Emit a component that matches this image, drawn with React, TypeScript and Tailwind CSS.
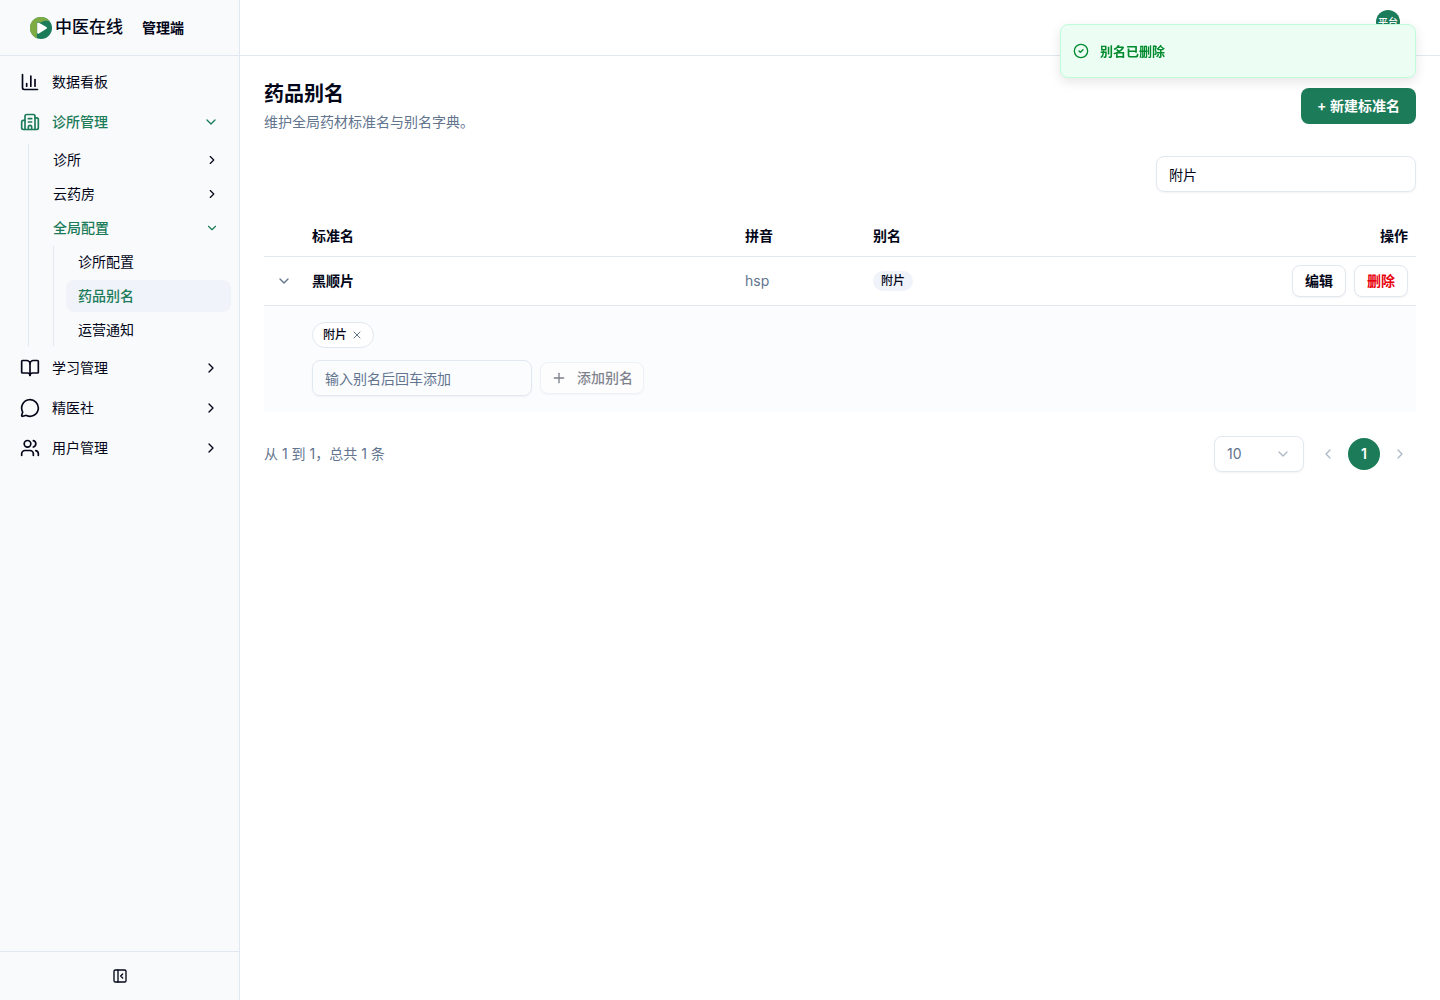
import React, { useState } from 'react';
import {
  BookOpen,
  ChevronDown,
  ChevronLeft,
  ChevronRight,
  MessageCircle,
  Plus,
  Users,
  X,
} from 'lucide-react';

interface MenuEntry {
  label: string;
  icon?: React.ReactNode;
  active?: boolean;
  open?: boolean;
  children?: MenuEntry[];
}

interface StandardName {
  id: number;
  name: string;
  pinyin: string;
  aliases: string[];
}

const ChartIcon = () => (
  <svg className="size-5" viewBox="0 0 24 24" fill="none" stroke="currentColor" strokeWidth="2" strokeLinecap="round" strokeLinejoin="round">
    <path d="M3 3v16a2 2 0 0 0 2 2h16" />
    <path d="M18 17V9" />
    <path d="M13 17V5" />
    <path d="M8 17v-3" />
  </svg>
);

const ClinicIcon = () => (
  <svg className="size-5" viewBox="0 0 24 24" fill="none" stroke="currentColor" strokeWidth="2" strokeLinecap="round" strokeLinejoin="round">
    <path d="M10 12h4" />
    <path d="M10 8h4" />
    <path d="M14 21v-3a2 2 0 0 0-4 0v3" />
    <path d="M6 10H4a2 2 0 0 0-2 2v7a2 2 0 0 0 2 2h16a2 2 0 0 0 2-2V9a2 2 0 0 0-2-2h-2" />
    <path d="M6 21V5a2 2 0 0 1 2-2h8a2 2 0 0 1 2 2v16" />
  </svg>
);

const CollapseIcon = () => (
  <svg className="size-4" viewBox="0 0 24 24" fill="none" stroke="currentColor" strokeWidth="2" strokeLinecap="round" strokeLinejoin="round">
    <rect width="18" height="18" x="3" y="3" rx="2" />
    <path d="M9 3v18" />
    <path d="m16 15-3-3 3-3" />
  </svg>
);

const Logo = () => (
  <svg className="size-[22px]" viewBox="0 0 22 22">
    <circle cx="11" cy="11" r="11" fill="#1c7c59" />
    <path d="M6.800 21.200A11 11 0 1 1 20 4.800C17 3 13.500 3.500 11 5.500L7 5Z" fill="#7fab45" />
    <path d="M7.200 6.800q0-2 1.700-1.100l7.500 4.200q1.500.9 0 1.900l-7.500 4.700q-1.700.9-1.700-1Z" fill="#fff" />
  </svg>
);

const menu: MenuEntry[] = [
  { label: '数据看板', icon: <ChartIcon /> },
  {
    label: '诊所管理',
    icon: <ClinicIcon />,
    active: true,
    open: true,
    children: [
      { label: '诊所', children: [] },
      { label: '云药房', children: [] },
      {
        label: '全局配置',
        active: true,
        open: true,
        children: [{ label: '诊所配置' }, { label: '药品别名', active: true }, { label: '运营通知' }],
      },
    ],
  },
  { label: '学习管理', icon: <BookOpen className="size-5" />, children: [] },
  { label: '精医社', icon: <MessageCircle className="size-5" />, children: [] },
  { label: '用户管理', icon: <Users className="size-5" />, children: [] },
];

const rows: StandardName[] = [{ id: 1, name: '黑顺片', pinyin: 'hsp', aliases: ['附片'] }];

const MenuItem = ({ entry, level }: { entry: MenuEntry; level: number }) => {
  const [open, setOpen] = useState(!!entry.open);
  const color = entry.active ? 'font-medium text-[#1c7c59]' : '';
  const chevron = level === 0 ? 'size-4' : 'size-[14px]';

  if (!entry.children) {
    return (
      <li>
        <a
          href="#"
          className={`flex items-center gap-3 rounded-lg px-3 ${level === 0 ? 'h-9' : 'h-8'} ${color} ${
            entry.active ? 'bg-[#f0f3f9]' : ''
          }`}
        >
          {entry.icon}
          {entry.label}
        </a>
      </li>
    );
  }

  return (
    <li>
      <button
        type="button"
        aria-expanded={open}
        onClick={() => setOpen(!open)}
        className={`flex w-full items-center gap-3 rounded-lg px-3 text-left ${level === 0 ? 'h-9' : 'h-8'} ${color}`}
      >
        {entry.icon}
        <span className="flex-1">{entry.label}</span>
        {open ? <ChevronDown className={chevron} /> : <ChevronRight className={chevron} />}
      </button>
      {open && entry.children.length > 0 && (
        <ul
          className={`flex flex-col gap-[2px] border-l border-slate-200 pl-3 ${
            level === 0 ? 'mt-1 ml-5' : 'mt-[2px] ml-3'
          }`}
        >
          {entry.children.map((child) => (
            <MenuItem key={child.label} entry={child} level={level + 1} />
          ))}
        </ul>
      )}
    </li>
  );
};

const Sidebar = () => (
  <aside className="flex w-60 shrink-0 flex-col border-r border-slate-200 bg-[#f9fafc]">
    <div className="flex h-14 items-center border-b border-slate-200 pl-[30px]">
      <Logo />
      <span className="ml-[3px] text-[17px] font-medium">中医在线</span>
      <span className="ml-[19px] font-semibold">管理端</span>
    </div>
    <nav className="flex-1 p-2">
      <ul className="flex flex-col gap-1">
        {menu.map((entry) => (
          <MenuItem key={entry.label} entry={entry} level={0} />
        ))}
      </ul>
    </nav>
    <div className="flex h-[49px] items-center justify-center border-t border-slate-200">
      <button type="button" aria-label="收起侧边栏" className="flex size-8 items-center justify-center">
        <CollapseIcon />
      </button>
    </div>
  </aside>
);

const AliasTable = () => {
  const [alias, setAlias] = useState('');

  return (
    <table className="mt-6 w-full table-fixed border-separate border-spacing-0 text-left">
      <colgroup>
        <col className="w-10" />
        <col />
        <col className="w-32" />
        <col className="w-[391px]" />
        <col className="w-40" />
      </colgroup>
      <thead>
        <tr className="h-[41px] *:border-b *:border-slate-200">
          <th />
          <th className="px-2 font-semibold">标准名</th>
          <th className="px-2 font-semibold">拼音</th>
          <th className="px-2 font-semibold">别名</th>
          <th className="px-2 text-right font-semibold">操作</th>
        </tr>
      </thead>
      <tbody>
        {rows.map((row) => (
          <React.Fragment key={row.id}>
            <tr className="h-[49px] *:border-b *:border-slate-200">
              <td>
                <button type="button" aria-label="展开" className="ml-3 flex size-4 items-center text-slate-500">
                  <ChevronDown className="size-4" />
                </button>
              </td>
              <td className="px-2 font-semibold">{row.name}</td>
              <td className="px-2 text-slate-500">{row.pinyin}</td>
              <td className="px-2">
                <div className="flex gap-1">
                  {row.aliases.map((item) => (
                    <span key={item} className="flex h-5 items-center rounded-full bg-[#f0f3f9] px-2 text-xs font-medium">
                      {item}
                    </span>
                  ))}
                </div>
              </td>
              <td className="px-2">
                <div className="flex justify-end gap-2">
                  <button type="button" className="h-8 rounded-lg border border-slate-200 bg-white px-3 font-semibold shadow-xs">
                    编辑
                  </button>
                  <button
                    type="button"
                    className="h-8 rounded-lg border border-slate-200 bg-white px-3 font-semibold text-[#e7000b] shadow-xs"
                  >
                    删除
                  </button>
                </div>
              </td>
            </tr>
            <tr className="bg-[#fbfcfe]">
              <td colSpan={5} className="py-4 pr-2 pl-12">
                <div className="flex flex-wrap gap-2">
                  {row.aliases.map((item) => (
                    <span
                      key={item}
                      className="flex h-[26px] items-center gap-1 rounded-full border border-slate-200 bg-white px-[10px] text-xs font-medium"
                    >
                      {item}
                      <button type="button" aria-label={`删除别名 ${item}`} className="text-slate-500">
                        <X className="size-3" />
                      </button>
                    </span>
                  ))}
                </div>
                <div className="mt-3 flex items-center gap-2">
                  <input
                    type="text"
                    aria-label="别名"
                    value={alias}
                    onChange={(e) => setAlias(e.target.value)}
                    placeholder="输入别名后回车添加"
                    className="h-9 w-[220px] rounded-lg border border-slate-200 px-3 shadow-xs placeholder:text-slate-500"
                  />
                  <button
                    type="button"
                    disabled={!alias}
                    className="flex h-8 items-center gap-[10px] rounded-lg border border-slate-200 bg-white px-[10px] font-medium shadow-xs disabled:opacity-50"
                  >
                    <Plus className="size-4" />
                    添加别名
                  </button>
                </div>
              </td>
            </tr>
          </React.Fragment>
        ))}
      </tbody>
    </table>
  );
};

const Pagination = () => (
  <div className="mt-6 flex items-center justify-between">
    <p className="text-slate-500">从 1 到 1，总共 1 条</p>
    <div className="flex items-center gap-2">
      <div className="relative">
        <select
          aria-label="每页条数"
          defaultValue="10"
          className="h-9 w-[90px] appearance-none rounded-lg border border-slate-200 bg-white px-3 text-slate-500 shadow-xs"
        >
          <option>10</option>
          <option>20</option>
          <option>50</option>
        </select>
        <ChevronDown className="pointer-events-none absolute top-[10px] right-[13px] size-4 text-slate-500 opacity-50" />
      </div>
      <div className="flex gap-1">
        <button type="button" disabled aria-label="上一页" className="flex size-8 items-center justify-center opacity-50">
          <ChevronLeft className="size-4 text-slate-500" />
        </button>
        <button type="button" className="size-8 rounded-full bg-[#1c7c59] font-semibold text-white">
          1
        </button>
        <button type="button" disabled aria-label="下一页" className="flex size-8 items-center justify-center opacity-50">
          <ChevronRight className="size-4 text-slate-500" />
        </button>
      </div>
    </div>
  </div>
);

const Toast = ({ message }: { message: string }) => (
  <div
    role="status"
    className="fixed top-6 right-6 flex h-[54px] w-[356px] items-center gap-[11px] rounded-lg border border-[#bffcd9] bg-[#ecfdf3] pl-3 text-[13px] font-semibold text-[#008a2e] shadow-[0_4px_12px_rgba(0,0,0,0.1)]"
  >
    <svg className="size-4" viewBox="0 0 24 24" fill="none" stroke="currentColor" strokeWidth="2" strokeLinecap="round" strokeLinejoin="round">
      <circle cx="12" cy="12" r="10" />
      <path d="m9 12 2 2 4-4" />
    </svg>
    {message}
  </div>
);

const App = () => {
  const [keyword, setKeyword] = useState('附片');

  return (
    <div className="flex min-h-screen bg-white font-['Inter','Noto_Sans_CJK_SC',sans-serif] text-sm text-[#020618]">
      <Sidebar />
      <div className="flex min-w-0 flex-1 flex-col">
        <header className="flex h-14 justify-end border-b border-slate-200 pt-[10px] pr-10">
          <span className="flex size-6 items-center justify-center rounded-full bg-[#1c7c59] text-[10px] font-medium text-white">
            平台
          </span>
        </header>
        <main className="p-6">
          <div className="flex items-center justify-between">
            <div>
              <h1 className="text-xl/7 font-semibold">药品别名</h1>
              <p className="mt-1 text-slate-500">维护全局药材标准名与别名字典。</p>
            </div>
            <button type="button" className="h-9 rounded-lg bg-[#1c7c59] px-4 font-semibold text-white">
              + 新建标准名
            </button>
          </div>
          <div className="mt-6 flex justify-end">
            <input
              type="text"
              aria-label="搜索"
              value={keyword}
              onChange={(e) => setKeyword(e.target.value)}
              className="h-9 w-[260px] rounded-lg border border-slate-200 px-3 shadow-xs"
            />
          </div>
          <AliasTable />
          <Pagination />
        </main>
      </div>
      <Toast message="别名已删除" />
    </div>
  );
};

export default App;
